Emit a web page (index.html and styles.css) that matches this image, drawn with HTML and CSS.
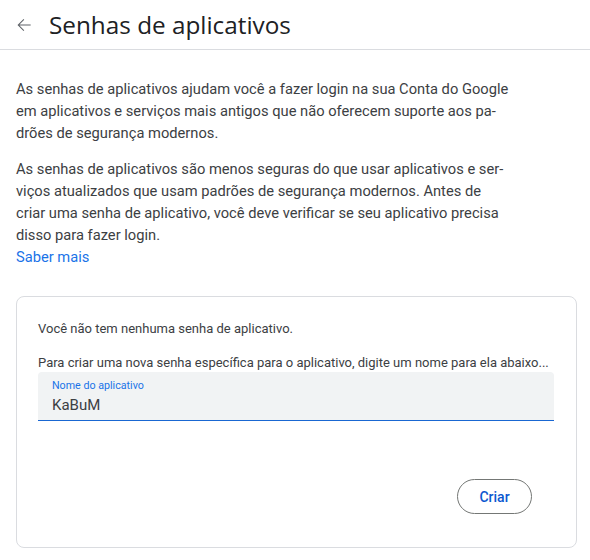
FILE: index.html
```html
<!DOCTYPE html>
<html lang="pt">
<head>
<meta charset="utf-8">
<link rel="stylesheet" href="styles.css">
</head>
<body>
<header class="topbar">
  <span class="back" aria-label="Voltar">
    <svg width="20" height="20" viewBox="0 0 24 24"><path d="M20 11.4H6.6l5.7-5.7-.9-.9L4.2 12l7.2 7.2.9-.9-5.7-5.7H20z" fill="#5f6368"/></svg>
  </span>
  <h1 class="title">Senhas de aplicativos</h1>
</header>
<main class="content">
  <p class="para">As senhas de aplicativos ajudam você a fazer login na sua Conta do Google<br>em aplicativos e serviços mais antigos que não oferecem suporte aos pa-<br>drões de segurança modernos.</p>
  <p class="para">As senhas de aplicativos são menos seguras do que usar aplicativos e ser-<br>viços atualizados que usam padrões de segurança modernos. Antes de<br>criar uma senha de aplicativo, você deve verificar se seu aplicativo precisa<br>disso para fazer login.<br><a class="link" href="#">Saber mais</a></p>
  <section class="card">
    <p class="card-text">Você não tem nenhuma senha de aplicativo.</p>
    <p class="card-text hint">Para criar uma nova senha específica para o aplicativo, digite um nome para ela abaixo...</p>
    <div class="field">
      <span class="field-label">Nome do aplicativo</span>
      <span class="field-value">KaBuM</span>
    </div>
    <div class="actions">
      <button class="btn">Criar</button>
    </div>
  </section>
</main>
</body>
</html>
```
FILE: styles.css
```css
html, body {
  margin: 0;
  padding: 0;
  background: #fff;
}
body {
  font-family: Roboto, "Noto Sans", sans-serif;
  color: #3c4043;
  width: 590px;
}
.topbar {
  display: flex;
  align-items: center;
  height: 50px;
  border-bottom: 1px solid #dadce0;
  box-sizing: border-box;
  padding-left: 14px;
}
.back {
  display: flex;
  width: 20px;
  height: 20px;
  margin-right: 15px;
  margin-top: 1px;
}
.title {
  margin: 0;
  font-family: "Open Sans", Roboto, sans-serif;
  font-weight: 400;
  font-size: 24.3px;
  color: #202124;
}
.content {
  padding: 28px 16px 0 16px;
}
.para {
  margin: 0 0 14px 0;
  white-space: nowrap;
  font-size: 14.7px;
  line-height: 22px;
  color: #3c4043;
}
.link {
  color: #1a73e8;
  text-decoration: none;
}
.card {
  margin-top: 28px;
  width: 561px;
  box-sizing: border-box;
  border: 1px solid #dadce0;
  border-radius: 8px;
  padding: 23px 22px 33px 21px;
}
.card-text {
  margin: 0;
  font-size: 13px;
  line-height: 18px;
  color: #3c4043;
}
.hint {
  margin-top: 16px;
}
.field {
  display: flex;
  flex-direction: column;
  width: 516px;
  height: 49px;
  box-sizing: border-box;
  background: #f1f3f4;
  border-bottom: 1.5px solid #1967d2;
  border-radius: 4px 4px 0 0;
  padding: 7px 14px 0 14px;
}
.field-label {
  font-size: 10.7px;
  line-height: 14px;
  color: #1a73e8;
}
.field-value {
  font-size: 15px;
  line-height: 20px;
  color: #3c4043;
  margin-top: 2px;
}
.actions {
  display: flex;
  justify-content: flex-end;
  margin-top: 58px;
  padding-right: 22px;
}
.btn {
  width: 75px;
  height: 35px;
  border: 1px solid #747775;
  border-radius: 18px;
  background: #fff;
  color: #0b57d0;
  font-family: Roboto, sans-serif;
  font-size: 14px;
  font-weight: 500;
  padding: 0;
}
```
